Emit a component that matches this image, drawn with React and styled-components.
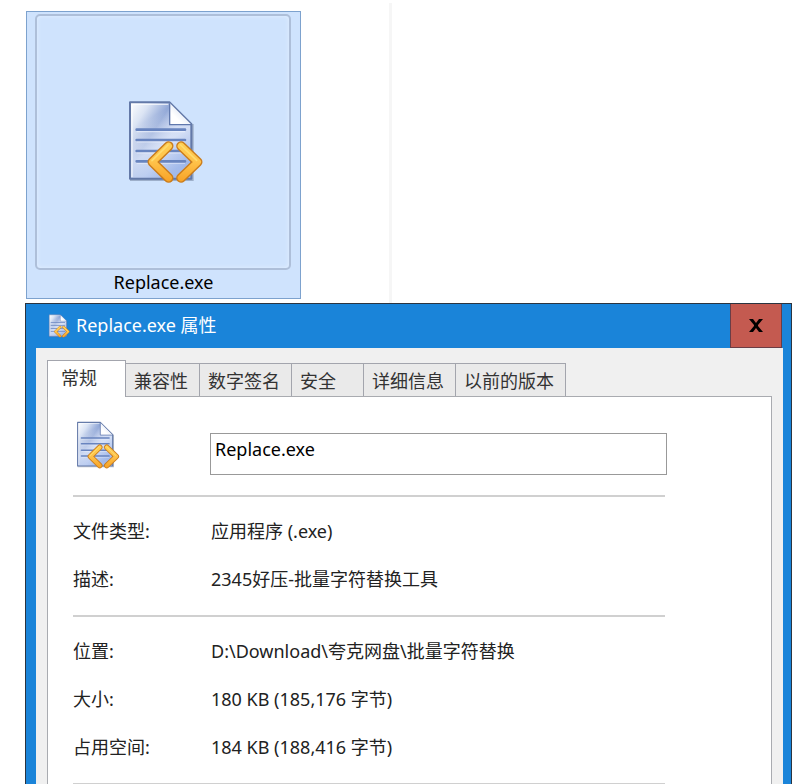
import { useId, useState } from 'react';
import styled, { createGlobalStyle } from 'styled-components';

const GlobalStyle = createGlobalStyle`
  * {
    box-sizing: border-box;
  }

  body {
    margin: 0;
    background: #fff;
    color: #000;
    font-family: 'Noto Sans', 'Noto Sans CJK SC', sans-serif;
    font-size: 18px;
    line-height: 24px;
  }

  button,
  input {
    font: inherit;
    color: inherit;
  }
`;

const Page = styled.div`
  display: flex;
  flex-direction: column;
  height: 100vh;
  overflow: hidden;
`;

const Explorer = styled.section`
  display: flex;
  align-items: flex-start;
  flex: none;
  padding-left: 26px;
`;

const FileTile = styled.figure`
  display: flex;
  flex-direction: column;
  width: 275px;
  height: 288px;
  margin: 11px 88px 4px 0;
  padding: 2px 8px;
  background: #cfe3fd;
  border: 1px solid #7da2ce;
`;

const Thumbnail = styled.div`
  display: flex;
  align-items: center;
  justify-content: center;
  width: 256px;
  height: 256px;
  border: 2px solid #aebfd9;
  border-radius: 5px;
  box-shadow: inset 0 0 4px #e4f0ff;
`;

const FileName = styled.figcaption`
  text-align: center;
`;

const PaneDivider = styled.div`
  align-self: stretch;
  width: 3px;
  margin-top: 3px;
  background: #f6f6f6;
`;

const Dialog = styled.section`
  display: flex;
  flex-direction: column;
  flex: 1;
  min-height: 0;
  margin: 0 14px 0 25px;
  background: #1a84d9;
  border: 1px solid #2b3440;
  border-bottom: none;
`;

const TitleBar = styled.header`
  display: flex;
  flex: none;
  align-items: center;
  height: 44px;
  padding: 0 9px 0 21px;
  color: #fff;
`;

const Title = styled.h1`
  flex: 1;
  margin: 0;
  padding: 0 0 2px 6px;
  font-size: 18px;
  font-weight: 400;
`;

const CloseButton = styled.button`
  display: flex;
  align-items: center;
  justify-content: center;
  width: 52px;
  height: 44px;
  padding: 0;
  background: #c45a50;
  border: 1px solid #6b3d45;
  border-top: none;
`;

const DialogBody = styled.div`
  display: flex;
  flex-direction: column;
  flex: 1;
  min-height: 0;
  margin: 0 8px 0 10px;
  padding: 12px 11px 0;
  background: #f0f0f0;
`;

const TabList = styled.div`
  display: flex;
  flex: none;
  align-items: flex-end;
`;

const Tab = styled.button`
  position: relative;
  height: ${({ $active }) => ($active ? 37 : 33)}px;
  min-width: ${({ $active }) => ($active ? 79 : 73)}px;
  margin: 0 0 ${({ $active }) => ($active ? -1 : 0)}px ${({ $active }) => ($active ? 0 : -1)}px;
  padding: ${({ $active }) => ($active ? '0 13px 2px' : '1px 11px 0 8px')};
  background: ${({ $active }) => ($active ? '#fff' : '#eaeaea')};
  border: 1px solid #a3a5ad;
  border-bottom: none;
  color: #333;
  text-align: left;
  white-space: nowrap;
`;

const TabPanel = styled.div`
  flex: 1;
  min-height: 0;
  padding-left: 25px;
  background: #fff;
  border: 1px solid #a9abb0;
  border-bottom: none;
`;

const NameRow = styled.div`
  display: grid;
  grid-template-columns: 137px 1fr;
  align-items: start;
  height: 98px;
  padding: 24px 104px 0 0;
`;

const NameInput = styled.input`
  width: 100%;
  height: 42px;
  margin-top: 12px;
  padding: 0 4px 11px;
  background: #fff;
  border: 1px solid #999;
  border-radius: 0;
  outline: none;
`;

const PropertyGroup = styled.dl`
  margin: 0 106px 0 0;
  padding: 11px 0;
  border-top: 2px solid #d0d0d0;
`;

const Property = styled.div`
  display: grid;
  grid-template-columns: 138px 1fr;
  align-items: center;
  height: 48px;
  padding-bottom: 2px;
`;

const Label = styled.dt`
  color: #222;
`;

const Value = styled.dd`
  margin: 0;
  color: #222;
  white-space: nowrap;
`;

const tabs = ['常规', '兼容性', '数字签名', '安全', '详细信息', '以前的版本'];

const groups = [
  [
    ['文件类型:', '应用程序 (.exe)'],
    ['描述:', '2345好压-批量字符替换工具'],
  ],
  [
    ['位置:', 'D:\\Download\\夸克网盘\\批量字符替换'],
    ['大小:', '180 KB (185,176 字节)'],
    ['占用空间:', '184 KB (188,416 字节)'],
  ],
  [],
];

const ScriptIcon = ({ width, height }) => {
  const id = useId();

  return (
    <svg width={width} height={height} viewBox="38 44 246 252" aria-hidden="true">
      <defs>
        <linearGradient id={`${id}page`} x1="0" y1="0" x2="1" y2="0.8">
          <stop offset="0" stopColor="#ffffff" />
          <stop offset="0.2" stopColor="#dbe4f4" />
          <stop offset="0.42" stopColor="#8ea5d6" />
          <stop offset="0.62" stopColor="#b4c4ea" />
          <stop offset="1" stopColor="#7b97d6" />
        </linearGradient>
        <linearGradient id={`${id}shade`} x1="0" y1="0" x2="0.5" y2="1">
          <stop offset="0.3" stopColor="#ffffff" stopOpacity="0" />
          <stop offset="0.65" stopColor="#e3ebfb" stopOpacity="0.75" />
          <stop offset="1" stopColor="#a9c0ee" stopOpacity="0.8" />
        </linearGradient>
        <linearGradient id={`${id}fold`} x1="0" y1="1" x2="1" y2="0">
          <stop offset="0.3" stopColor="#ffffff" />
          <stop offset="1" stopColor="#c5d2ea" />
        </linearGradient>
        <linearGradient id={`${id}gold`} x1="0" y1="170" x2="0" y2="290" gradientUnits="userSpaceOnUse">
          <stop offset="0" stopColor="#ffd055" />
          <stop offset="0.5" stopColor="#ffc24a" />
          <stop offset="1" stopColor="#f7a226" />
        </linearGradient>
      </defs>
      <path d="M62 284h188V116" fill="none" stroke="#53617c" strokeOpacity="0.4" strokeWidth="6" />
      <path d="M62 51h119l65 65v164H62z" fill={`url(#${id}page)`} />
      <path d="M62 51h119l65 65v164H62z" fill={`url(#${id}shade)`} stroke="#6379a8" strokeWidth="6" strokeLinejoin="round" />
      <path d="M68 275V57h109" fill="none" stroke="#fff" strokeOpacity="0.7" strokeWidth="4" />
      <path d="M181 53l64 64h-64z" fill={`url(#${id}fold)`} />
      <path d="M181 54v64h64" fill="none" stroke="#6078ad" strokeWidth="4" />
      <path d="M82 138h145M82 169h145M82 202h145M82 233h145" stroke="#f3f7ff" strokeOpacity="0.6" strokeWidth="5" />
      <path d="M82 133h145M82 164h145M82 197h145M82 228h145" stroke="#6884bf" strokeWidth="8" strokeLinecap="round" />
      <g fill="none" strokeLinecap="round" strokeLinejoin="round">
        <path d="M178 182l-49 48 49 48M215 182l50 48-50 48" stroke="#cb7d1c" strokeWidth="29" />
        <path d="M178 182l-49 48 49 48M215 182l50 48-50 48" stroke={`url(#${id}gold)`} strokeWidth="20" />
        <path d="M176 179l-48 47M214 179l48 46" stroke="#ffdc6e" strokeWidth="5" />
      </g>
    </svg>
  );
};

function App() {
  const [fileName, setFileName] = useState('Replace.exe');
  const [activeTab, setActiveTab] = useState(tabs[0]);

  return (
    <>
      <GlobalStyle />
      <Page>
        <Explorer>
          <FileTile>
            <Thumbnail>
              <ScriptIcon width={82} height={84} />
            </Thumbnail>
            <FileName>Replace.exe</FileName>
          </FileTile>
          <PaneDivider />
        </Explorer>
        <Dialog>
          <TitleBar>
            <ScriptIcon width={23} height={24} />
            <Title>Replace.exe 属性</Title>
            <CloseButton type="button" aria-label="关闭">
              <svg width="14" height="13" viewBox="0 0 14 13" aria-hidden="true">
                <path d="M0 0h4l3 4 3-4h4L9 6v1l5 6h-4L7 9l-3 4H0l5-6V6z" fill="#000" />
              </svg>
            </CloseButton>
          </TitleBar>
          <DialogBody>
            <TabList role="tablist">
              {tabs.map((tab) => (
                <Tab
                  key={tab}
                  type="button"
                  role="tab"
                  aria-selected={tab === activeTab}
                  $active={tab === activeTab}
                  onClick={() => setActiveTab(tab)}
                >
                  {tab}
                </Tab>
              ))}
            </TabList>
            <TabPanel role="tabpanel">
              <NameRow>
                <ScriptIcon width={47} height={48} />
                <NameInput
                  type="text"
                  aria-label="文件名"
                  value={fileName}
                  onChange={(e) => setFileName(e.target.value)}
                />
              </NameRow>
              {groups.map((group, index) => (
                <PropertyGroup key={index}>
                  {group.map(([label, value]) => (
                    <Property key={label}>
                      <Label>{label}</Label>
                      <Value>{value}</Value>
                    </Property>
                  ))}
                </PropertyGroup>
              ))}
            </TabPanel>
          </DialogBody>
        </Dialog>
      </Page>
    </>
  );
}

export default App;
